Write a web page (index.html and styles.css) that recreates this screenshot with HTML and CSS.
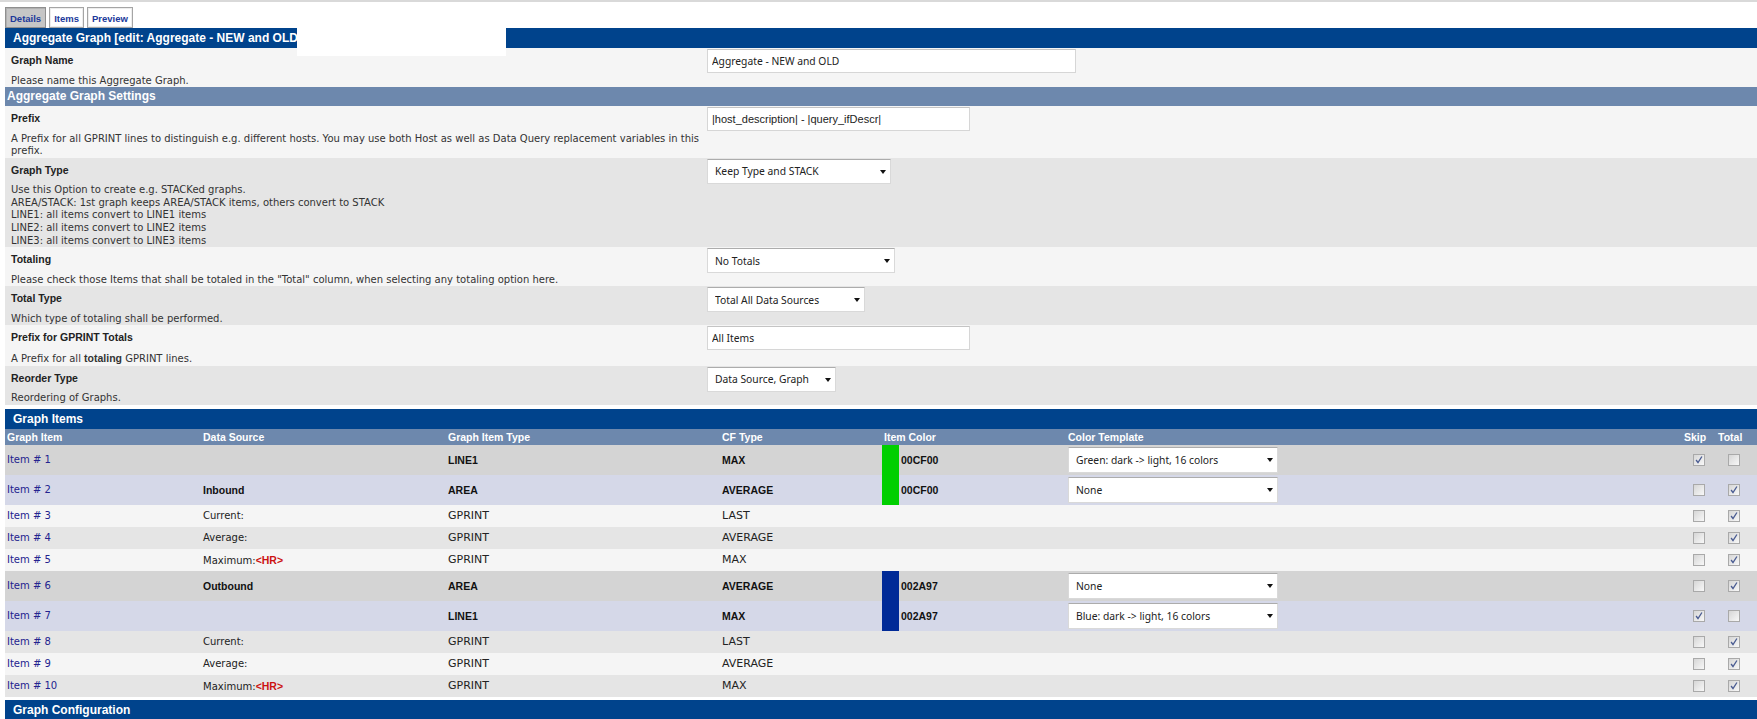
FILE: index.html
```html
<!DOCTYPE html>
<html>
<head>
<meta charset="utf-8">
<title>Aggregate Graph</title>
<link rel="stylesheet" href="styles.css">
</head>
<body>
<div class="topband"></div>
<div class="page">
  <div class="tabs">
    <span class="tab active">Details</span>
    <span class="tab">Items</span>
    <span class="tab">Preview</span>
  </div>
  <div class="bar">Aggregate Graph [edit: Aggregate - NEW and OLD]</div>

  <div class="row l">
    <div class="lbl"><div class="name">Graph Name</div><div class="desc">Please name this Aggregate Graph.</div></div>
    <div class="ctl"><input class="txt w369" type="text" value="Aggregate - NEW and OLD"></div>
  </div>
  <div class="subbar">Aggregate Graph Settings</div>
  <div class="row l">
    <div class="lbl"><div class="name">Prefix</div><div class="desc">A Prefix for all GPRINT lines to distinguish e.g. different hosts. You may use both Host as well as Data Query replacement variables in this<br>prefix.</div></div>
    <div class="ctl"><input class="txt w263 pipes" type="text" value="|host_description| - |query_ifDescr|"></div>
  </div>
  <div class="row d">
    <div class="lbl"><div class="name">Graph Type</div><div class="desc">Use this Option to create e.g. STACKed graphs.<br>AREA/STACK: 1st graph keeps AREA/STACK items, others convert to STACK<br>LINE1: all items convert to LINE1 items<br>LINE2: all items convert to LINE2 items<br>LINE3: all items convert to LINE3 items</div></div>
    <div class="ctl"><span class="sel w184"><select><option>Keep Type and STACK</option></select></span></div>
  </div>
  <div class="row l">
    <div class="lbl"><div class="name">Totaling</div><div class="desc">Please check those Items that shall be totaled in the "Total" column, when selecting any totaling option here.</div></div>
    <div class="ctl"><span class="sel w188"><select><option>No Totals</option></select></span></div>
  </div>
  <div class="row d">
    <div class="lbl"><div class="name">Total Type</div><div class="desc">Which type of totaling shall be performed.</div></div>
    <div class="ctl"><span class="sel w158"><select><option>Total All Data Sources</option></select></span></div>
  </div>
  <div class="row l">
    <div class="lbl"><div class="name">Prefix for GPRINT Totals</div><div class="desc">A Prefix for all <b>totaling</b> GPRINT lines.</div></div>
    <div class="ctl"><input class="txt w263" type="text" value="All Items"></div>
  </div>
  <div class="row d">
    <div class="lbl"><div class="name">Reorder Type</div><div class="desc">Reordering of Graphs.</div></div>
    <div class="ctl"><span class="sel w129"><select><option>Data Source, Graph</option></select></span></div>
  </div>

  <div class="bar gap">Graph Items</div>
  <table class="items">
    <colgroup>
      <col class="c1"><col class="c2"><col class="c3"><col class="c4"><col class="c5"><col class="c6"><col class="c7"><col class="c8"><col class="c9">
    </colgroup>
    <thead>
      <tr><th>Graph Item</th><th>Data Source</th><th>Graph Item Type</th><th>CF Type</th><th colspan="2">Item Color</th><th>Color Template</th><th class="hs">Skip</th><th class="hs">Total</th></tr>
    </thead>
    <tbody>
      <tr class="tall g1">
        <td><a class="lnk">Item # 1</a></td><td></td><td class="b">LINE1</td><td class="b">MAX</td><td class="sw green"></td><td class="b">00CF00</td>
        <td><span class="sel w210"><select><option>Green: dark -&gt; light, 16 colors</option></select></span></td>
        <td class="cs"><span class="cb on"><svg viewBox="0 0 12 12" width="10" height="10"><path d="M2.5 6 L4.8 9 L9.5 1.8"/></svg></span></td>
        <td class="ct"><span class="cb"></span></td>
      </tr>
      <tr class="tall g2">
        <td><a class="lnk">Item # 2</a></td><td class="b">Inbound</td><td class="b">AREA</td><td class="b">AVERAGE</td><td class="sw green"></td><td class="b">00CF00</td>
        <td><span class="sel w210"><select><option>None</option></select></span></td>
        <td class="cs"><span class="cb"></span></td>
        <td class="ct"><span class="cb on"><svg viewBox="0 0 12 12" width="10" height="10"><path d="M2.5 6 L4.8 9 L9.5 1.8"/></svg></span></td>
      </tr>
      <tr class="short l">
        <td><a class="lnk">Item # 3</a></td><td>Current:</td><td class="w">GPRINT</td><td class="w">LAST</td><td></td><td></td><td></td>
        <td class="cs"><span class="cb"></span></td>
        <td class="ct"><span class="cb on"><svg viewBox="0 0 12 12" width="10" height="10"><path d="M2.5 6 L4.8 9 L9.5 1.8"/></svg></span></td>
      </tr>
      <tr class="short d">
        <td><a class="lnk">Item # 4</a></td><td>Average:</td><td class="w">GPRINT</td><td class="w">AVERAGE</td><td></td><td></td><td></td>
        <td class="cs"><span class="cb"></span></td>
        <td class="ct"><span class="cb on"><svg viewBox="0 0 12 12" width="10" height="10"><path d="M2.5 6 L4.8 9 L9.5 1.8"/></svg></span></td>
      </tr>
      <tr class="short l">
        <td><a class="lnk">Item # 5</a></td><td>Maximum:<span class="hr">&lt;HR&gt;</span></td><td class="w">GPRINT</td><td class="w">MAX</td><td></td><td></td><td></td>
        <td class="cs"><span class="cb"></span></td>
        <td class="ct"><span class="cb on"><svg viewBox="0 0 12 12" width="10" height="10"><path d="M2.5 6 L4.8 9 L9.5 1.8"/></svg></span></td>
      </tr>
      <tr class="tall g1">
        <td><a class="lnk">Item # 6</a></td><td class="b">Outbound</td><td class="b">AREA</td><td class="b">AVERAGE</td><td class="sw blue"></td><td class="b">002A97</td>
        <td><span class="sel w210"><select><option>None</option></select></span></td>
        <td class="cs"><span class="cb"></span></td>
        <td class="ct"><span class="cb on"><svg viewBox="0 0 12 12" width="10" height="10"><path d="M2.5 6 L4.8 9 L9.5 1.8"/></svg></span></td>
      </tr>
      <tr class="tall g2">
        <td><a class="lnk">Item # 7</a></td><td></td><td class="b">LINE1</td><td class="b">MAX</td><td class="sw blue"></td><td class="b">002A97</td>
        <td><span class="sel w210"><select><option>Blue: dark -&gt; light, 16 colors</option></select></span></td>
        <td class="cs"><span class="cb on"><svg viewBox="0 0 12 12" width="10" height="10"><path d="M2.5 6 L4.8 9 L9.5 1.8"/></svg></span></td>
        <td class="ct"><span class="cb"></span></td>
      </tr>
      <tr class="short d">
        <td><a class="lnk">Item # 8</a></td><td>Current:</td><td class="w">GPRINT</td><td class="w">LAST</td><td></td><td></td><td></td>
        <td class="cs"><span class="cb"></span></td>
        <td class="ct"><span class="cb on"><svg viewBox="0 0 12 12" width="10" height="10"><path d="M2.5 6 L4.8 9 L9.5 1.8"/></svg></span></td>
      </tr>
      <tr class="short l">
        <td><a class="lnk">Item # 9</a></td><td>Average:</td><td class="w">GPRINT</td><td class="w">AVERAGE</td><td></td><td></td><td></td>
        <td class="cs"><span class="cb"></span></td>
        <td class="ct"><span class="cb on"><svg viewBox="0 0 12 12" width="10" height="10"><path d="M2.5 6 L4.8 9 L9.5 1.8"/></svg></span></td>
      </tr>
      <tr class="short d">
        <td><a class="lnk">Item # 10</a></td><td>Maximum:<span class="hr">&lt;HR&gt;</span></td><td class="w">GPRINT</td><td class="w">MAX</td><td></td><td></td><td></td>
        <td class="cs"><span class="cb"></span></td>
        <td class="ct"><span class="cb on"><svg viewBox="0 0 12 12" width="10" height="10"><path d="M2.5 6 L4.8 9 L9.5 1.8"/></svg></span></td>
      </tr>
    </tbody>
  </table>
  <div class="bar gap3">Graph Configuration</div>
</div>
<div class="redact"></div>
</body>
</html>
```

FILE: styles.css
```css
* { box-sizing: border-box; }
html, body { margin: 0; padding: 0; background: #fff; }
body {
  position: relative;
  width: 1757px;
  height: 719px;
  overflow: hidden;
  font-family: "DejaVu Sans", Verdana, sans-serif;
  font-size: 10px;
  color: #222;
}
.topband { height: 2px; background: #d9d9d9; }
.page { padding-left: 5px; }

/* tabs */
.tabs { display: flex; gap: 3px; padding-top: 5px; }
.tab {
  height: 21px;
  padding: 0 4px 3px;
  display: flex;
  align-items: flex-end;
  border: 1px solid #a5a5a5;
  box-shadow: inset 0 0 0 1px #ededed;
  background: #fff;
  color: #20399a;
  font: bold 9.5px "Liberation Sans", Arial, sans-serif;
}
.tab.active { background: #c6c6c6; border-color: #8f8f8f; box-shadow: inset 1px 1px 0 #b0b0b0; }

/* bars */
.bar {
  height: 20px;
  padding-left: 8px;
  background: #00438c;
  color: #fff;
  font: bold 12px/20px "Liberation Sans", Arial, sans-serif;
  white-space: nowrap;
}
.bar.gap { margin-top: 4px; }
.bar.gap3 { margin-top: 3px; }
.subbar {
  height: 19px;
  padding-left: 2px;
  background: #6d88ad;
  color: #fff;
  font: bold 12px/19px "Liberation Sans", Arial, sans-serif;
}
.redact { position: absolute; left: 297px; top: 28px; width: 209px; height: 28px; background: #fff; }

/* settings rows */
.row { display: flex; padding-top: 1px; }
.row.l { background: #f5f5f5; }
.row.d { background: #e5e5e5; }
.lbl { flex: none; width: 702px; padding-left: 6px; }
.name { font: bold 10.5px/23.5px "Liberation Sans", Arial, sans-serif; color: #222; }
.desc { padding-top: 2px; line-height: 12.6px; color: #333; white-space: nowrap; }
.desc b { font-family: "Liberation Sans", Arial, sans-serif; font-size: 10.5px; }
.ctl { flex: none; }

.txt {
  display: block;
  height: 24px;
  margin: 0;
  padding: 0 4px;
  border: 1px solid #d6d6d6;
  border-top-color: #c4c4c4;
  background: #fff;
  color: #222;
  font: 10.3px "Noto Sans", "Liberation Sans", sans-serif;
  outline: none;
}
.txt.pipes { font: 11px "Liberation Sans", Arial, sans-serif; }
.w369 { width: 369px; }
.w263 { width: 263px; }

.sel { position: relative; display: block; height: 25px; }
.sel select {
  -webkit-appearance: none;
  appearance: none;
  width: 100%;
  height: 100%;
  margin: 0;
  padding: 0 0 0 7px;
  border: 1px solid #d9d9d9;
  border-top-color: #acacac;
  border-radius: 0;
  background: #fff;
  color: #222;
  font: 10.3px "Noto Sans", "Liberation Sans", sans-serif;
  outline: none;
}
.sel::after {
  content: "";
  position: absolute;
  right: 5px;
  top: 11px;
  border-left: 3.5px solid transparent;
  border-right: 3.5px solid transparent;
  border-top: 4px solid #111;
}
.w184 { width: 184px; }
.w188 { width: 188px; }
.w158 { width: 158px; }
.w129 { width: 129px; }
.w210 { width: 210px; height: 26px; }

/* graph items table */
.items { width: 1752px; table-layout: fixed; border-collapse: collapse; }
.c1 { width: 196px; } .c2 { width: 245px; } .c3 { width: 274px; } .c4 { width: 162px; }
.c5 { width: 17px; } .c6 { width: 167px; } .c7 { width: 614px; } .c8 { width: 34px; } .c9 { width: 43px; }
.items th {
  height: 16px;
  padding: 0 2px;
  background: #6d88ad;
  color: #fff;
  text-align: left;
  font: bold 10.5px/16px "Liberation Sans", Arial, sans-serif;
  white-space: nowrap;
}
.items th.hs { padding-left: 4px; }
.items td { padding: 0 2px; white-space: nowrap; vertical-align: middle; }
.items tr.tall td { height: 30px; }
.items tr.short td { height: 22px; }
.items tr.g1 { background: #d4d4d4; }
.items tr.g2 { background: #d5d8e8; }
.items tr.l { background: #f5f5f5; }
.items tr.d { background: #e5e5e5; }
.items td.b { font: bold 10.5px "Liberation Sans", Arial, sans-serif; color: #111; }
.items td.w { font-size: 11px; }
.items td.sw { padding: 0; }
.items td.green { background: #00cf00; }
.items td.blue { background: #002a97; }
.lnk { color: #23238f; text-decoration: none; }
.hr { color: #cc1111; font: bold 10.5px "Liberation Sans", Arial, sans-serif; }
.items td.cs { padding-left: 13px; }
.items td.ct { padding-left: 14px; }
.cb {
  display: block;
  width: 12px;
  height: 12px;
  border: 1px solid #a9a9a9;
  background: linear-gradient(135deg, #d6d6d6 0%, #f8f8f8 100%);
}
.cb svg { display: block; }
.cb path { fill: none; stroke: #4a5c92; stroke-width: 1.6; }
```
